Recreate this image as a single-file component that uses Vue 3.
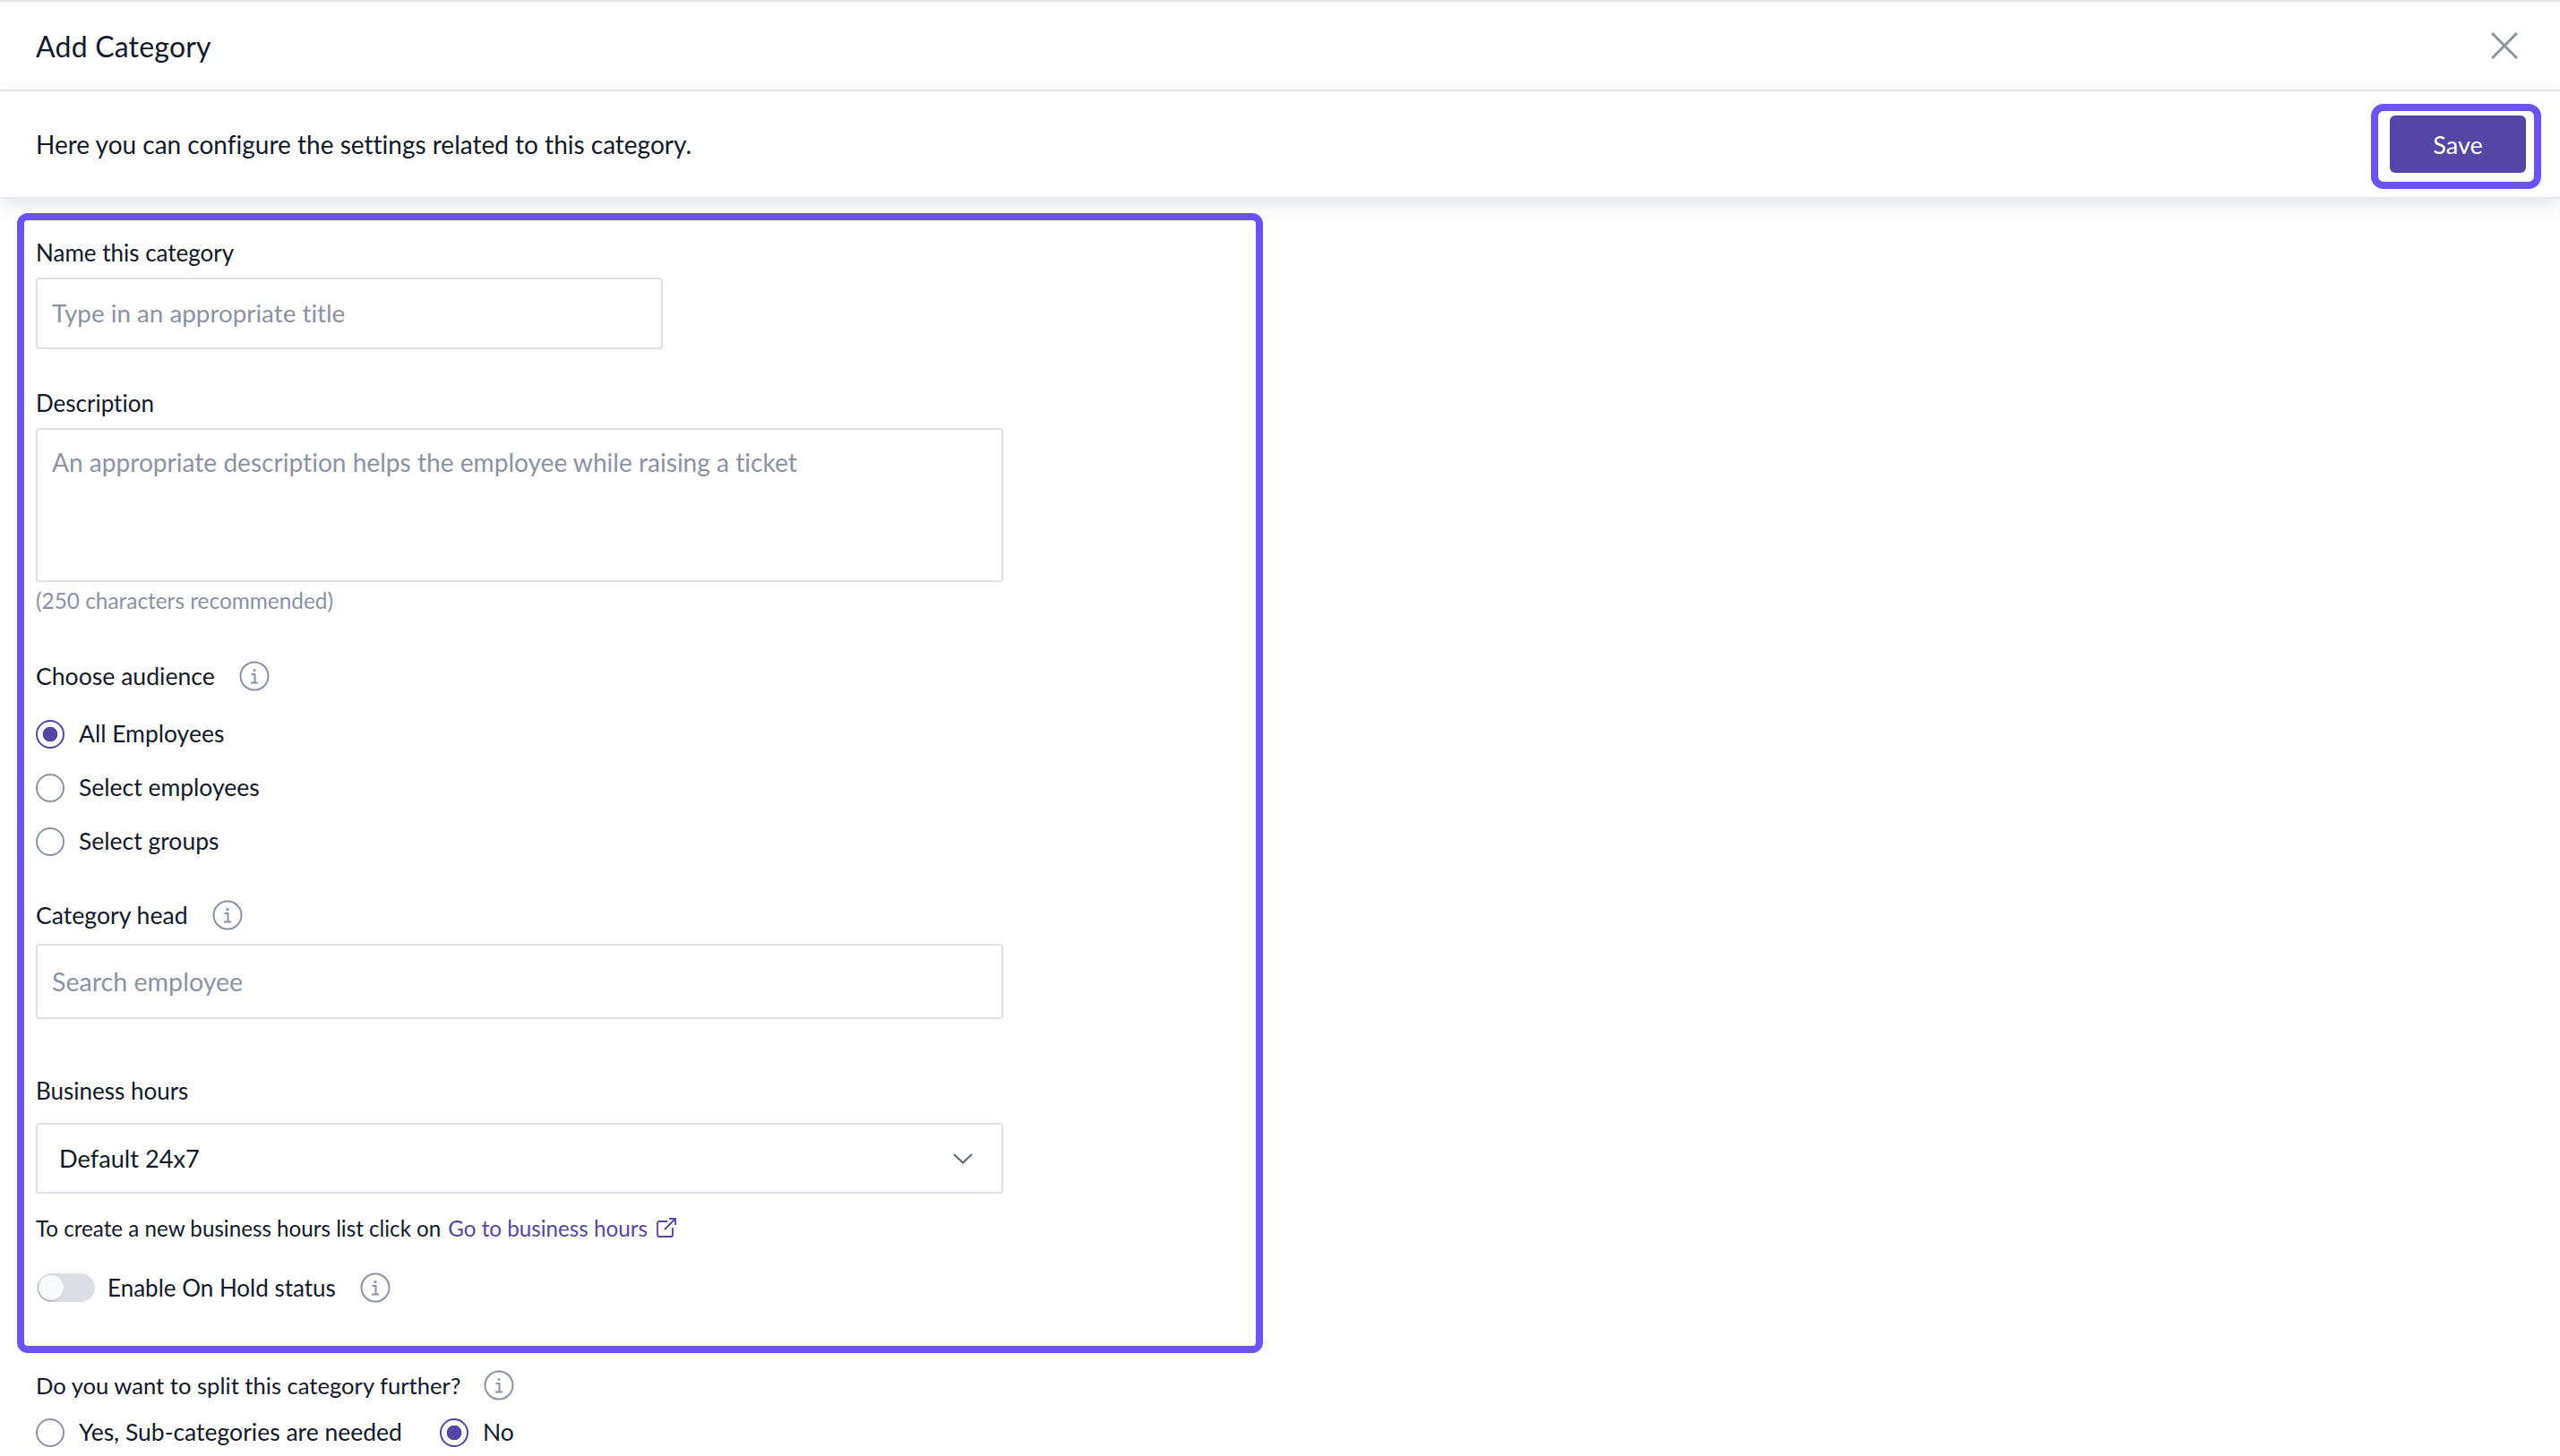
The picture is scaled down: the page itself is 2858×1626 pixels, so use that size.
<script setup>
const audience = ['All Employees', 'Select employees', 'Select groups']
</script>

<template>
  <div class="page">
    <header class="title-bar">
      <h1 class="title">Add Category</h1>
      <svg class="close" width="30" height="30" viewBox="0 0 30 30" fill="none" stroke="#8b949c" stroke-width="3">
        <path d="M1 1 29 29M29 1 1 29" />
      </svg>
    </header>
    <div class="sub-bar">
      <p class="intro">Here you can configure the settings related to this category.</p>
      <div class="save-mark"><button class="save">Save</button></div>
    </div>

    <section class="mark">
      <label class="label">Name this category</label>
      <div class="field name-field"><span class="placeholder">Type in an appropriate title</span></div>

      <label class="label desc-label">Description</label>
      <div class="field area"><span class="placeholder area-text">An appropriate description helps the employee while raising a ticket</span></div>
      <div class="hint">(250 characters recommended)</div>

      <div class="label with-info audience-label">
        <span class="wide">Choose audience</span>
        <svg class="info" viewBox="0 0 34 34" fill="none"><circle cx="17" cy="17" r="15.5" stroke="#8a93a6" stroke-width="2"/><circle cx="17" cy="10.5" r="1.6" fill="#8a93a6"/><path d="M13.5 15h4v9M13 24.500h8" stroke="#8a93a6" stroke-width="2"/></svg>
      </div>
      <div class="radio-list">
        <div v-for="(item, i) in audience" :key="item" class="radio-row">
          <span class="radio" :class="{ on: i === 0 }"></span>
          <span class="radio-text">{{ item }}</span>
        </div>
      </div>

      <div class="label with-info head-label">
        <span class="wide">Category head</span>
        <svg class="info" viewBox="0 0 34 34" fill="none"><circle cx="17" cy="17" r="15.5" stroke="#8a93a6" stroke-width="2"/><circle cx="17" cy="10.5" r="1.6" fill="#8a93a6"/><path d="M13.5 15h4v9M13 24.500h8" stroke="#8a93a6" stroke-width="2"/></svg>
      </div>
      <div class="field search"><span class="placeholder search-text">Search employee</span></div>

      <label class="label hours-label">Business hours</label>
      <div class="field select">
        <span class="select-value">Default 24x7</span>
        <svg width="22" height="12" viewBox="0 0 22 12" fill="none" stroke="#5c6675" stroke-width="2"><path d="M1 1 11 10.500 21 1" /></svg>
      </div>
      <div class="helper">
        <span>To create a new business hours list click on</span>
        <a class="link">Go to business hours</a>
        <svg class="ext" width="24" height="24" viewBox="0 0 24 24" fill="none" stroke="#5546a6" stroke-width="1.800"><path d="M13 5H4a2 2 0 0 0-2 2v13a2 2 0 0 0 2 2h13a2 2 0 0 0 2-2v-8M10 14 22 2M15 2h7v7"/></svg>
      </div>
      <div class="hold-row">
        <span class="toggle"><span class="knob"></span></span>
        <span class="hold-text">Enable On Hold status</span>
        <svg class="info" viewBox="0 0 34 34" fill="none"><circle cx="17" cy="17" r="15.5" stroke="#8a93a6" stroke-width="2"/><circle cx="17" cy="10.5" r="1.6" fill="#8a93a6"/><path d="M13.5 15h4v9M13 24.500h8" stroke="#8a93a6" stroke-width="2"/></svg>
      </div>
    </section>

    <div class="split">
      <div class="label with-info tight">
        <span class="split-q">Do you want to split this category further?</span>
        <svg class="info" viewBox="0 0 34 34" fill="none"><circle cx="17" cy="17" r="15.5" stroke="#8a93a6" stroke-width="2"/><circle cx="17" cy="10.5" r="1.6" fill="#8a93a6"/><path d="M13.5 15h4v9M13 24.500h8" stroke="#8a93a6" stroke-width="2"/></svg>
      </div>
      <div class="split-options">
        <span class="radio"></span>
        <span class="radio-text yes">Yes, Sub-categories are needed</span>
        <span class="radio on"></span>
        <span class="radio-text">No</span>
      </div>
    </div>
  </div>
</template>

<style>
html, body { margin: 0; background: #fff; }
</style>

<style scoped>
.page {
  width: 2858px;
  height: 1626px;
  overflow: hidden;
  background: #fff;
  color: #12192b;
  font-family: Lato, "Noto Sans", sans-serif;
  font-variant-ligatures: none;
}
.title-bar {
  box-sizing: border-box;
  height: 102px;
  border-top: 2px solid #dfe3e3;
  border-bottom: 2px solid #ebebee;
  padding: 0 47px 0 40px;
  display: flex;
  align-items: center;
  justify-content: space-between;
}
.title { margin: 0; font-size: 32px; font-weight: 400; letter-spacing: 0.2px; }
.sub-bar {
  box-sizing: border-box;
  height: 120px;
  border-bottom: 2px solid #e6e7ea;
  padding: 0 21px 0 40px;
  display: flex;
  align-items: center;
  justify-content: space-between;
  box-shadow: 0 6px 18px rgba(90, 100, 120, 0.18);
}
.intro { margin: 0; font-size: 28px; }
.save-mark {
  margin-top: 5px;
  border: 8px solid #6b52f7;
  border-radius: 14px;
  padding: 5px 9px 10px 13px;
}
.save {
  display: block;
  width: 152px;
  height: 64px;
  border: 0;
  border-radius: 6px;
  background: #5546a6;
  color: #fff;
  font: 400 27px Lato, sans-serif;
}
.mark {
  box-sizing: border-box;
  width: 1391px;
  height: 1273px;
  margin: 16px 0 0 19px;
  border: 8px solid #6b52f7;
  border-radius: 12px;
  padding: 19px 0 0 13px;
}
.label {
  display: block;
  height: 36px;
  line-height: 34px;
  font-size: 26px;
}
.wide { font-size: 26.6px; }
.with-info { display: flex; align-items: center; gap: 27px; }
.info { width: 34px; height: 34px; flex: none; }
.field {
  box-sizing: border-box;
  border: 2px solid #dfe0e6;
  border-radius: 4px;
  background: #fff;
}
.placeholder { color: #8a93a6; font-size: 27.8px; }
.area-text { font-size: 28.1px; }
.search-text { font-size: 28.6px; }
.name-field { width: 700px; height: 80px; margin-top: 9px; padding-left: 16px; line-height: 76px; }
.desc-label { margin-top: 43px; }
.area { width: 1080px; height: 172px; margin-top: 9px; padding: 18px 16px 0; line-height: 36px; }
.hint { height: 32px; line-height: 30px; margin-top: 6px; font-size: 24.4px; color: #8a93a6; }
.audience-label { margin-top: 49px; }
.radio-list { margin-top: 17px; }
.radio-row { height: 60px; display: flex; align-items: center; }
.radio {
  box-sizing: border-box;
  width: 32px;
  height: 32px;
  flex: none;
  border: 2px solid #8a93a6;
  border-radius: 50%;
  background: #fff;
}
.radio.on {
  border-color: #5546a6;
  background: radial-gradient(circle, #5546a6 0 8px, #fff 8.6px);
}
.radio-text { margin: -3px 0 0 16px; font-size: 26.5px; }
.head-label { margin-top: 34px; }
.search { width: 1080px; height: 84px; margin-top: 14px; padding-left: 16px; line-height: 80px; }
.hours-label { margin-top: 63px; }
.select {
  width: 1080px;
  height: 79px;
  margin-top: 17px;
  padding: 0 32px 0 24px;
  display: flex;
  align-items: center;
  justify-content: space-between;
}
.select-value { font-size: 27.2px; }
.helper { height: 30px; margin-top: 23px; display: flex; align-items: center; font-size: 24.2px; }
.link { margin-left: 8px; color: #5546a6; }
.ext { margin-left: 9px; }
.hold-row { height: 36px; margin-top: 34px; display: flex; align-items: center; }
.toggle {
  width: 64px;
  height: 32px;
  margin-left: 2px;
  border-radius: 16px;
  background: #dcdde3;
  display: block;
  position: relative;
}
.knob {
  position: absolute;
  left: 1px;
  top: 2px;
  width: 28px;
  height: 28px;
  border-radius: 50%;
  background: #f8f9fc;
  box-shadow: -1px 1px 2px rgba(60, 60, 80, 0.4);
}
.hold-text { margin: 0 27px 0 14px; font-size: 26px; }
.split { padding: 18px 0 0 40px; }
.tight { gap: 26px; }
.split-q { font-size: 25.6px; }
.split-options { margin-top: 17px; height: 36px; display: flex; align-items: center; }
.yes { margin-right: 42px; }
</style>
